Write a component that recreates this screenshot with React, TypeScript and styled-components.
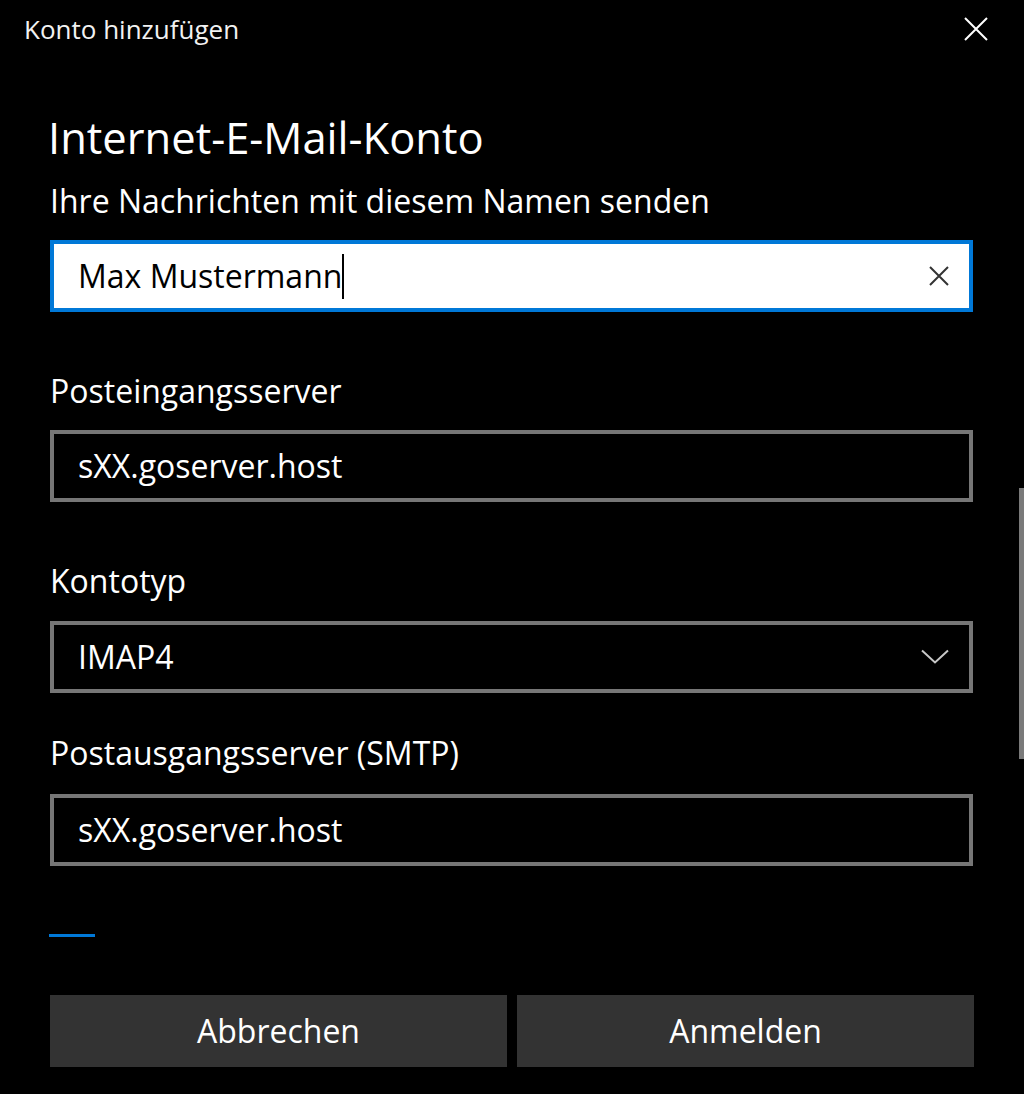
import React from "react";
import styled, { createGlobalStyle } from "styled-components";

const GlobalStyle = createGlobalStyle`
  html, body {
    margin: 0;
    padding: 0;
    background: #000;
  }
  body {
    font-family: "Open Sans", "Noto Sans", "Liberation Sans", sans-serif;
    color: #fff;
  }
  * { box-sizing: border-box; }
`;

const Window = styled.div`
  position: relative;
  width: 1024px;
  height: 1094px;
  background: #000;
  overflow: hidden;
`;

const TitleBar = styled.div`
  height: 58px;
  display: flex;
  align-items: center;
  justify-content: space-between;
  padding: 0 36px 0 24px;
`;

const TitleText = styled.div`
  font-size: 26px;
  line-height: 36px;
  color: #f2f2f2;
`;

const CloseButton = styled.button`
  width: 24px;
  height: 24px;
  padding: 0;
  border: 0;
  background: transparent;
  display: flex;
  align-items: center;
  justify-content: center;
  cursor: pointer;
`;

const Main = styled.div`
  display: flex;
  flex-direction: column;
  padding: 0 51px 0 50px;
`;

const Heading = styled.h1`
  margin: 54px 0 0 -2px;
  font-size: 43.5px;
  line-height: 52px;
  font-weight: 400;
  color: #fff;
`;

const Label = styled.div<{ $top: number }>`
  margin-top: ${(p) => p.$top}px;
  font-size: 32px;
  line-height: 42px;
  color: #fff;
`;

const InputBox = styled.div<{ $top: number; $focused?: boolean }>`
  margin-top: ${(p) => p.$top}px;
  height: 72px;
  display: flex;
  align-items: center;
  justify-content: space-between;
  padding: 0 19px 0 24px;
  border: 4px solid ${(p) => (p.$focused ? "#0078d7" : "#767676")};
  background: ${(p) => (p.$focused ? "#fff" : "#000")};
  color: ${(p) => (p.$focused ? "#000" : "#fff")};
`;

const InputText = styled.span`
  display: flex;
  align-items: center;
  font-size: 32px;
  line-height: 42px;
`;

const Caret = styled.span`
  display: inline-block;
  width: 2px;
  height: 45px;
  margin-left: 0;
  background: #000;
`;

const IconSlot = styled.span`
  display: flex;
  align-items: center;
  justify-content: center;
`;

const LinkBar = styled.div`
  margin-top: 68px;
  width: 46px;
  height: 3px;
  margin-left: -1px;
  background: #0078d7;
`;

const ButtonRow = styled.div`
  margin: 58px -1px 0 0;
  display: grid;
  grid-template-columns: 1fr 1fr;
  gap: 10px;
`;

const Button = styled.button`
  height: 72px;
  border: 0;
  background: #333;
  color: #fff;
  font-family: inherit;
  font-size: 32px;
  line-height: 42px;
  padding: 0;
  cursor: pointer;
`;

const ScrollThumb = styled.div`
  position: absolute;
  right: 0;
  top: 488px;
  width: 5px;
  height: 271px;
  background: #7a7a7a;
`;

export default function App() {
  return (
    <Window>
      <GlobalStyle />
      <TitleBar>
        <TitleText>Konto hinzufügen</TitleText>
        <CloseButton aria-label="Schließen">
          <svg width="24" height="24" viewBox="0 0 24 24">
            <path d="M1 1 L23 23 M23 1 L1 23" stroke="#fff" strokeWidth="2" fill="none" />
          </svg>
        </CloseButton>
      </TitleBar>
      <Main>
        <Heading>Internet-E-Mail-Konto</Heading>
        <Label $top={16}>Ihre Nachrichten mit diesem Namen senden</Label>
        <InputBox $top={18} $focused>
          <InputText>
            Max Mustermann
            <Caret />
          </InputText>
          <IconSlot>
            <svg width="22" height="22" viewBox="0 0 22 22">
              <path d="M2 2 L20 20 M20 2 L2 20" stroke="#333" strokeWidth="2" fill="none" />
            </svg>
          </IconSlot>
        </InputBox>

        <Label $top={58}>Posteingangsserver</Label>
        <InputBox $top={18}>
          <InputText>sXX.goserver.host</InputText>
        </InputBox>

        <Label $top={58}>Kontotyp</Label>
        <InputBox $top={19}>
          <InputText>IMAP4</InputText>
          <IconSlot>
            <svg width="30" height="16" viewBox="0 0 30 16">
              <path d="M2 1.5 L15 13.5 L28 1.5" stroke="#c8c8c8" strokeWidth="2" fill="none" />
            </svg>
          </IconSlot>
        </InputBox>

        <Label $top={39}>Postausgangsserver (SMTP)</Label>
        <InputBox $top={20}>
          <InputText>sXX.goserver.host</InputText>
        </InputBox>

        <LinkBar />

        <ButtonRow>
          <Button>Abbrechen</Button>
          <Button>Anmelden</Button>
        </ButtonRow>
      </Main>
      <ScrollThumb />
    </Window>
  );
}
